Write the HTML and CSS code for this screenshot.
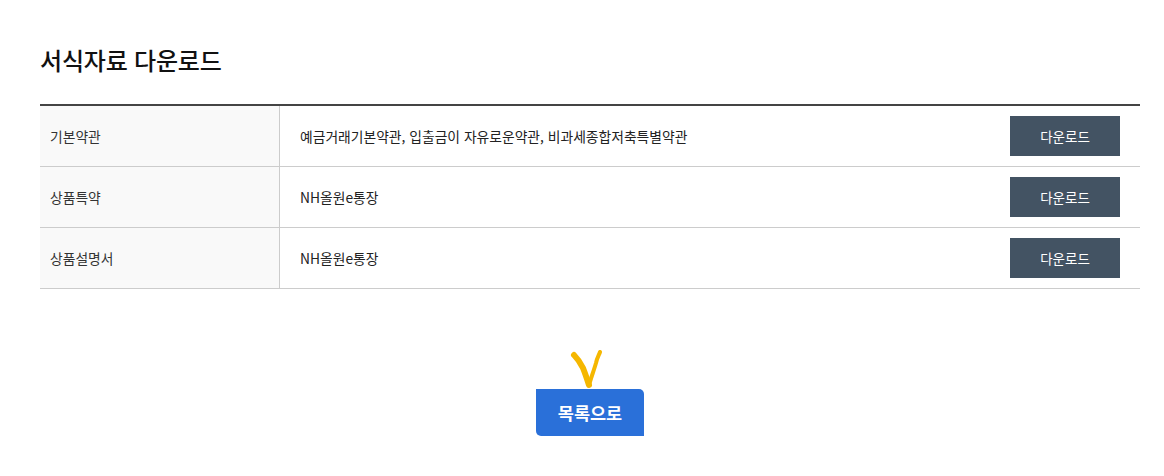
FILE: index.html
```html
<!DOCTYPE html>
<html lang="ko">
<head>
    <meta charset="UTF-8">
    <meta name="viewport" content="width=device-width, initial-scale=1.0">
    <title>서식자료 다운로드</title>
    <link rel="stylesheet" href="styles.css">
</head>
<body>
    <div class="container">
        <h2 class="title">서식자료 다운로드</h2>

        <!-- 서식 목록 -->
        <table class="doc-table">
            <tr>
                <th>기본약관</th>
                <td>예금거래기본약관, 입출금이 자유로운약관, 비과세종합저축특별약관</td>
                <td class="action"><button class="btn-down">다운로드</button></td>
            </tr>
            <tr>
                <th>상품특약</th>
                <td>NH올원e통장</td>
                <td class="action"><button class="btn-down">다운로드</button></td>
            </tr>
            <tr>
                <th>상품설명서</th>
                <td>NH올원e통장</td>
                <td class="action"><button class="btn-down">다운로드</button></td>
            </tr>
        </table>

        <!-- 하단 버튼 -->
        <div class="bottom">
            <div class="btn-wrap">
                <svg class="mark" width="36" height="40" viewBox="0 0 36 40">
                    <path d="M5 5 C8 8 11 12 14 18 C16 23 18 29 20 35" fill="none" stroke="#f5b700" stroke-width="6" stroke-linecap="round"/>
                    <path d="M20 35 C22 28 25 20 27 13 C28 8 30 5 31 2" fill="none" stroke="#f5b700" stroke-width="4" stroke-linecap="round"/>
                </svg>
                <button class="btn-list">목록으로</button>
            </div>
        </div>
    </div>
</body>
</html>
```

FILE: styles.css
```css
/* 전체 */
body {
    font-family: "Noto Sans CJK KR", "Liberation Sans", sans-serif;
    margin: 0;
    background-color: #fff;
    color: #222;
}

.container {
    width: 1100px;
    margin-left: 40px;
    padding-top: 42px;
}

/* 제목 */
.title {
    margin: 0 0 26px;
    font-size: 24px;
    font-weight: 500;
    line-height: 36px;
    color: #111;
    letter-spacing: -0.2px;
}

/* 표 */
.doc-table {
    width: 100%;
    border-collapse: collapse;
    border-top: 2px solid #444;
    font-size: 13.8px;
}

.doc-table th,
.doc-table td {
    height: 60px;
    padding: 0;
    border-bottom: 1px solid #ccc;
    text-align: left;
    vertical-align: middle;
}

.doc-table th {
    width: 229px;
    padding-left: 10px;
    background-color: #f9f9f9;
    border-right: 1px solid #ccc;
    font-weight: normal;
    color: #333;
}

.doc-table td {
    padding-left: 20px;
    color: #222;
}

.doc-table td.action {
    width: 130px;
    padding: 0;
}

.btn-down {
    display: block;
    width: 110px;
    height: 40px;
    border: none;
    background-color: #435363;
    color: #fff;
    font-family: inherit;
    font-size: 13.5px;
    cursor: pointer;
}

/* 하단 */
.bottom {
    display: flex;
    justify-content: center;
    padding-top: 100px;
}

.btn-wrap {
    position: relative;
}

.mark {
    position: absolute;
    left: 33px;
    top: -39px;
}

.btn-list {
    display: block;
    width: 108px;
    height: 47px;
    border: none;
    border-radius: 0 5px 0 5px;
    background-color: #2a70d9;
    color: #fff;
    font-family: inherit;
    font-size: 17.5px;
    font-weight: bold;
    cursor: pointer;
}
```
